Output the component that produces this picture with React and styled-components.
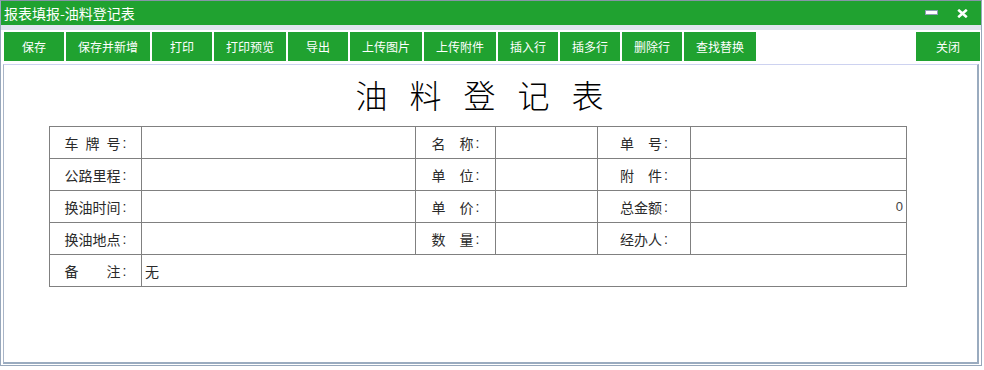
import React from 'react';
import styled, { createGlobalStyle } from 'styled-components';

const Global = createGlobalStyle`
  html, body { margin: 0; padding: 0; background: #fff; }
  body { font-family: "Noto Sans CJK SC", "Liberation Sans", sans-serif; }
  * { box-sizing: border-box; }
`;

const GREEN = '#20a230';

const Window = styled.div`
  width: 982px;
  height: 366px;
  border: 1px solid #97a7bb;
  border-top-color: #8795a7;
  display: flex;
  flex-direction: column;
`;

const TitleBar = styled.div`
  height: 24px;
  flex: none;
  background: ${GREEN};
  color: #fff;
  font-size: 14px;
  display: flex;
  align-items: center;
  justify-content: space-between;
  padding: 0 13px 0 3px;
`;

const TitleText = styled.span`
  line-height: 24px;
  white-space: nowrap;
`;

const Controls = styled.div`
  display: flex;
  align-items: center;
  gap: 19px;
`;

const Strip = styled.div`
  height: 5px;
  flex: none;
  background: #dfe5ee;
`;

const Toolbar = styled.div`
  height: 34px;
  flex: none;
  display: flex;
  align-items: flex-start;
  gap: 2px;
  padding: 2px 1px 0 3px;
`;

const Spacer = styled.div`
  flex: 1;
`;

const Button = styled.button`
  height: 29px;
  min-width: ${(p) => p.$w || 60}px;
  padding: 0 12px;
  border: none;
  margin: 0;
  background: ${GREEN};
  color: #fff;
  font-family: "Noto Sans CJK SC", "Liberation Sans", sans-serif;
  font-size: 12px;
  line-height: 29px;
  white-space: nowrap;
  cursor: pointer;
`;

const PanelWrap = styled.div`
  flex: 1;
  display: flex;
  padding: 0 2px 1px 2px;
`;

const Panel = styled.div`
  flex: 1;
  border-top: 1px solid #cdd2f0;
  border-left: 1px solid #a9b5c7;
  border-right: 2px solid #9aabbf;
  border-bottom: 2px solid #9aabbf;
  display: flex;
  flex-direction: column;
`;

const FormTitle = styled.div`
  height: 61px;
  line-height: 59px;
  text-align: center;
  font-size: 32px;
  letter-spacing: 22px;
  color: #000;
  font-weight: 300;
`;

const Grid = styled.div`
  margin-left: 45px;
  width: 858px;
  display: grid;
  grid-template-columns: 91px 273px 79px 101px 92px 215px;
  grid-template-rows: repeat(5, 31px);
  gap: 1px;
  padding: 1px;
  background: #808080;
  font-size: 14px;
  color: #2a2a2a;
`;

const LabelCell = styled.div`
  background: #fff;
  display: flex;
  align-items: center;
  justify-content: center;
`;

const LabelChars = styled.span`
  display: inline-flex;
  justify-content: space-between;
  width: ${(p) => p.$n * 14}px;
`;

const Colon = styled.span`
  margin-left: 2px;
  font-family: "Liberation Sans", sans-serif;
`;

const ValueCell = styled.div`
  background: #fff;
  display: flex;
  align-items: center;
  justify-content: ${(p) => (p.$right ? 'flex-end' : 'flex-start')};
  padding: 0 3px;
  grid-column: ${(p) => (p.$span ? `span ${p.$span}` : 'auto')};
  color: ${(p) => (p.$right ? '#444' : '#2a2a2a')};
  font-family: ${(p) => (p.$right ? '"Liberation Sans", sans-serif' : 'inherit')};
  font-size: ${(p) => (p.$right ? '13px' : '14px')};
`;

const Label = ({ text, n }) => (
  <LabelCell>
    <LabelChars $n={n}>
      {text.split('').map((c, i) => (
        <span key={i}>{c}</span>
      ))}
    </LabelChars>
    <Colon>:</Colon>
  </LabelCell>
);

const MinIcon = () => (
  <svg width="13" height="6" viewBox="0 0 13 6">
    <rect x="0.5" y="0.5" width="12" height="4" fill="#fff" stroke="#8d9db4" />
  </svg>
);

const CloseIcon = () => (
  <svg width="11" height="9" viewBox="0 0 11 9">
    <path d="M1.2 0.8 L9.8 8.2 M9.8 0.8 L1.2 8.2" stroke="#fff" strokeWidth="2.6" fill="none" />
  </svg>
);

const buttons = ['保存', '保存并新增', '打印', '打印预览', '导出', '上传图片', '上传附件', '插入行', '插多行', '删除行', '查找替换'];

const rows = [
  [['车牌号', 4], ['名称', 3], ['单号', 3], ''],
  [['公路里程', 4], ['单位', 3], ['附件', 3], ''],
  [['换油时间', 4], ['单价', 3], ['总金额', 3], '0'],
  [['换油地点', 4], ['数量', 3], ['经办人', 3], ''],
];

export default function App() {
  return (
    <>
      <Global />
      <Window>
        <TitleBar>
          <TitleText>报表填报-油料登记表</TitleText>
          <Controls>
            <MinIcon />
            <CloseIcon />
          </Controls>
        </TitleBar>
        <Strip />
        <Toolbar>
          {buttons.map((b) => (
            <Button key={b}>{b}</Button>
          ))}
          <Spacer />
          <Button $w={64}>关闭</Button>
        </Toolbar>
        <PanelWrap>
          <Panel>
            <FormTitle>油料登记表</FormTitle>
            <Grid>
              {rows.map((r, i) => (
                <React.Fragment key={i}>
                  <Label text={r[0][0]} n={r[0][1]} />
                  <ValueCell />
                  <Label text={r[1][0]} n={r[1][1]} />
                  <ValueCell />
                  <Label text={r[2][0]} n={r[2][1]} />
                  <ValueCell $right={!!r[3]}>{r[3]}</ValueCell>
                </React.Fragment>
              ))}
              <Label text="备注" n={4} />
              <ValueCell $span={5}>无</ValueCell>
            </Grid>
          </Panel>
        </PanelWrap>
      </Window>
    </>
  );
}
